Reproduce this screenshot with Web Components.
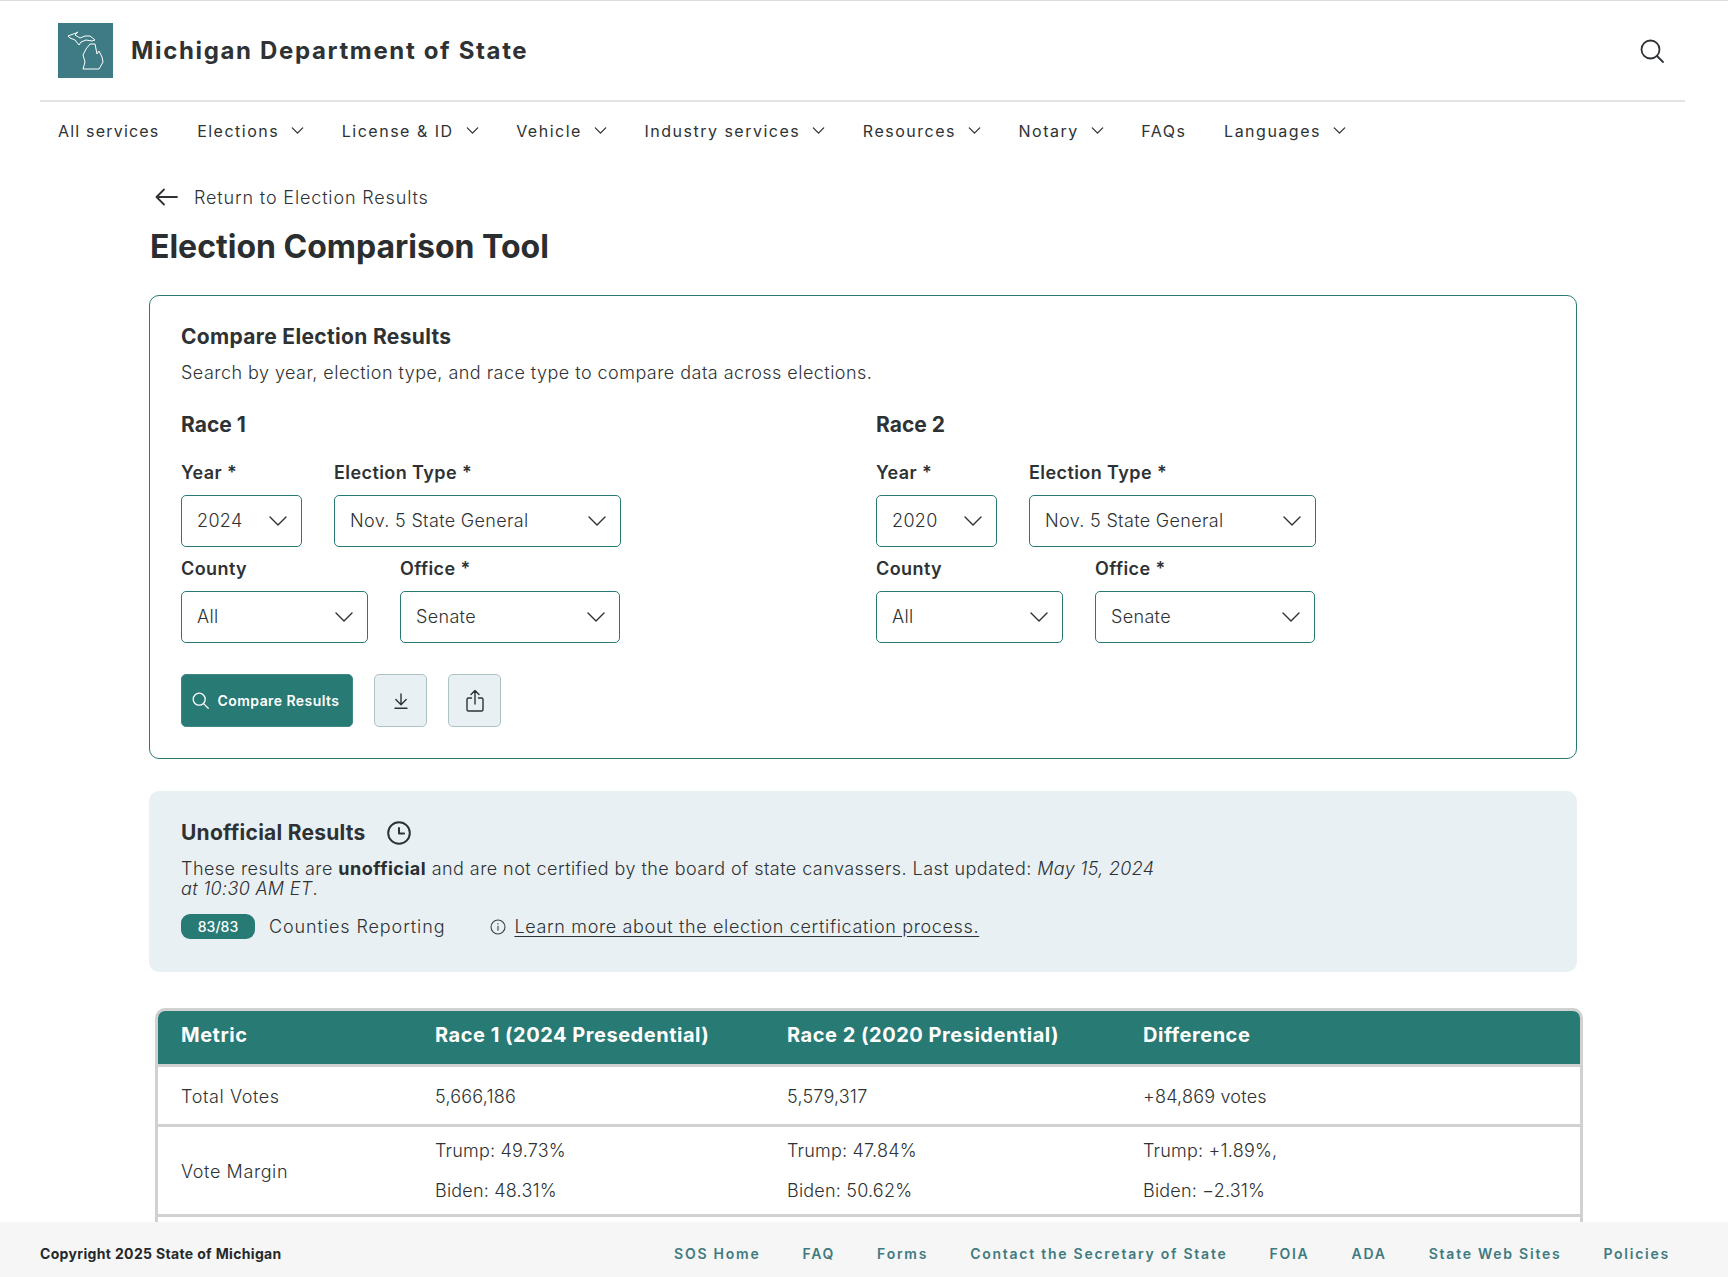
<!DOCTYPE html>
<html lang="en">
<head>
<meta charset="utf-8">
<title>Election Comparison Tool</title>
<style>
    html, body { margin: 0; height: 100%; }
    body {
        height: 100vh;
        overflow: hidden;
        display: flex;
        flex-direction: column;
        font-family: "Inter", "Liberation Sans", sans-serif;
        color: #2e3234;
        background: #fff;
    }
    page-main { display: block; flex: 1; min-height: 0; overflow: hidden; }
</style>
</head>
<body>
<site-header></site-header>
<site-nav>
    <nav-item style="letter-spacing:1.2px">All services</nav-item>
    <nav-item menu>Elections</nav-item>
    <nav-item menu>License &amp; ID</nav-item>
    <nav-item menu>Vehicle</nav-item>
    <nav-item menu>Industry services</nav-item>
    <nav-item menu>Resources</nav-item>
    <nav-item menu>Notary</nav-item>
    <nav-item>FAQs</nav-item>
    <nav-item menu>Languages</nav-item>
</site-nav>
<page-main>
    <page-heading></page-heading>
    <compare-card>
        <race-form slot="race" name="Race 1" year="2024"></race-form>
        <race-form slot="race" name="Race 2" year="2020"></race-form>
    </compare-card>
    <unofficial-results></unofficial-results>
    <results-table></results-table>
</page-main>
<site-footer></site-footer>

<script>
const chevron = (size, stroke) => `<svg width="${size}" height="${size}" viewBox="0 0 20 20" fill="none" stroke="currentColor" stroke-width="${stroke}" stroke-linecap="round" stroke-linejoin="round"><path d="M2 6l8 8 8-8"/></svg>`;

class SiteHeader extends HTMLElement {
    constructor(){
        super();
        this.shadowDOM = this.attachShadow({mode:"open"});
    }

    connectedCallback(){
        this.shadowDOM.innerHTML = `
        <style>
            :host {
                display: block;
                flex: none;
                border-top: 1px solid #dcdcdc;
            }
            .wrap {
                margin: 0 43px 0 40px;
                height: 99px;
                border-bottom: 2px solid #e3e3e3;
                padding: 0 20px 0 18px;
                display: flex;
                align-items: center;
                gap: 18px;
            }
            .logo {
                width: 55px;
                height: 55px;
                background: #3e7b85;
                display: block;
                flex: none;
            }
            h1 {
                margin: 0;
                font-size: 24px;
                line-height: 30px;
                font-weight: 700;
                letter-spacing: 1.65px;
                color: #2e3234;
                flex: 1;
            }
            .search { color: #2e3234; display: block; }
        </style>
        <div class="wrap">
            <svg class="logo" viewBox="0 0 55 55" fill="none" stroke="#fff" stroke-width="1" stroke-linejoin="round">
                <path d="M10 13l8-3 2-1-3 3 5 3 5-2h5l5 4-3 1-6-1-5 2-2 3-4-5-5-2z"/>
                <path d="M32 21h5l1 5 1 5 2-3 3 6 1 5-4 7H25l2-7-2-7 3-6z"/>
            </svg>
            <h1>Michigan Department of State</h1>
            <svg class="search" width="26" height="26" viewBox="0 0 26 26" fill="none" stroke="currentColor" stroke-width="1.8" stroke-linecap="round"><circle cx="11.5" cy="11.500" r="9"/><path d="M18 18l6 6"/></svg>
        </div>
        `;
    }
}

class SiteNav extends HTMLElement {
    constructor(){
        super();
        this.shadowDOM = this.attachShadow({mode:"open"});
    }

    connectedCallback(){
        this.shadowDOM.innerHTML = `
        <style>
            :host {
                display: flex;
                flex: none;
                height: 57px;
                align-items: center;
                gap: 37.6px;
                padding: 0 0 0 58px;
                font-size: 16px;
                letter-spacing: 1.5px;
                color: #2e3234;
            }
        </style>
        <slot></slot>
        `;
    }
}

class NavItem extends HTMLElement {
    constructor(){
        super();
        this.shadowDOM = this.attachShadow({mode:"open"});
    }

    connectedCallback(){
        const arrow = this.hasAttribute("menu") ? chevron(13, 2) : "";
        this.shadowDOM.innerHTML = `
        <style>
            :host {
                display: inline-flex;
                align-items: center;
                gap: 12px;
                line-height: 24px;
                white-space: nowrap;
            }
            svg { display: block; }
        </style>
        <span><slot></slot></span>${arrow}
        `;
    }
}

class PageHeading extends HTMLElement {
    constructor(){
        super();
        this.shadowDOM = this.attachShadow({mode:"open"});
    }

    connectedCallback(){
        this.shadowDOM.innerHTML = `
        <style>
            :host { display: block; padding: 26px 0 0 150px; }
            a {
                display: flex;
                align-items: center;
                gap: 16px;
                margin: 0 0 0 5px;
                height: 24px;
                font-size: 18px;
                font-weight: 300;
                color: #2e3234;
                text-decoration: none;
                letter-spacing: 0.85px;
            }
            h1 {
                margin: 18px 0 28px;
                font-size: 32px;
                line-height: 40px;
                font-weight: 700;
                color: #2a2e30;
            }
        </style>
        <a href="#">
            <svg width="23" height="18" viewBox="0 0 23 18" fill="none" stroke="currentColor" stroke-width="1.8" stroke-linecap="round" stroke-linejoin="round"><path d="M22 9H1.500M9 1.500L1.500 9 9 16.500"/></svg>
            Return to Election Results
        </a>
        <h1>Election Comparison Tool</h1>
        `;
    }
}

class FieldSelect extends HTMLElement {
    constructor(){
        super();
        this.shadowDOM = this.attachShadow({mode:"open"});
    }

    connectedCallback(){
        this.shadowDOM.innerHTML = `
        <style>
            :host {
                display: block;
                width: ${this.getAttribute("width")}px;
            }
            .label {
                display: block;
                font-size: 18px;
                font-weight: 600;
                letter-spacing: 0.42px;
                line-height: 24px;
                margin-bottom: 10px;
                white-space: nowrap;
            }
            .box {
                box-sizing: border-box;
                height: 52px;
                border: 1px solid #287a75;
                border-radius: 5px;
                background: #fff;
                padding: 0 13px 0 15px;
                display: flex;
                align-items: center;
                justify-content: space-between;
                font-size: 18px;
                font-weight: 300;
                letter-spacing: 0.33px;
                color: #2e3234;
                white-space: nowrap;
            }
            .box span { margin-top: -1px; }
            svg { display: block; flex: none; }
        </style>
        <span class="label">${this.getAttribute("label")}</span>
        <div class="box"><span><slot></slot></span>${chevron(20, 1.4)}</div>
        `;
    }
}

class RaceForm extends HTMLElement {
    constructor(){
        super();
        this.shadowDOM = this.attachShadow({mode:"open"});
    }

    connectedCallback(){
        this.shadowDOM.innerHTML = `
        <style>
            :host { display: block; }
            h3 {
                margin: 0 0 23px;
                font-size: 21px;
                line-height: 26px;
                font-weight: 700;
            }
            .row { display: flex; gap: 32px; margin-bottom: 10px; }
        </style>
        <h3>${this.getAttribute("name")}</h3>
        <div class="row">
            <field-select label="Year *" width="121">${this.getAttribute("year")}</field-select>
            <field-select label="Election Type *" width="287">Nov. 5 State General</field-select>
        </div>
        <div class="row">
            <field-select label="County" width="187">All</field-select>
            <field-select label="Office *" width="220">Senate</field-select>
        </div>
        `;
    }
}

class CompareCard extends HTMLElement {
    constructor(){
        super();
        this.shadowDOM = this.attachShadow({mode:"open"});
    }

    connectedCallback(){
        this.shadowDOM.innerHTML = `
        <style>
            :host {
                display: block;
                box-sizing: border-box;
                width: 1428px;
                margin-left: 149px;
                height: 464px;
                border: 1px solid #287a75;
                border-radius: 10px;
                padding: 28px 31px 0;
            }
            h2 {
                margin: 0;
                font-size: 21px;
                letter-spacing: 0.33px;
                line-height: 26px;
                font-weight: 700;
            }
            p {
                margin: 10px 0 26px;
                font-size: 18px;
                font-weight: 300;
                letter-spacing: 0.46px;
                line-height: 26px;
                color: #2e3234;
            }
            .races {
                display: grid;
                grid-template-columns: 695px 1fr;
            }
            .actions {
                display: flex;
                margin-top: 21px;
                gap: 21px;
            }
            button {
                box-sizing: border-box;
                height: 53px;
                border-radius: 5px;
                font-family: inherit;
                padding: 0;
                display: flex;
                align-items: center;
                justify-content: center;
            }
            .primary {
                width: 172px;
                background: #287a75;
                border: 1px solid #3f8883;
                color: #fff;
                font-size: 14px;
                font-weight: 600;
                letter-spacing: 0.44px;
                gap: 9px;
                padding-right: 3px;
            }
            .ghost {
                width: 53px;
                background: #e9f0f3;
                border: 1px solid #aec2c4;
                color: #2e3234;
            }
            svg { display: block; }
        </style>
        <h2>Compare Election Results</h2>
        <p>Search by year, election type, and race type to compare data across elections.</p>
        <div class="races"><slot name="race"></slot></div>
        <div class="actions">
            <button class="primary">
                <svg width="17" height="17" viewBox="0 0 17 17" fill="none" stroke="currentColor" stroke-width="1.3" stroke-linecap="round"><circle cx="7.200" cy="7.200" r="6"/><path d="M11.600 11.600l4.600 4.600"/></svg>
                Compare Results
            </button>
            <button class="ghost">
                <svg width="18" height="18" viewBox="0 0 18 18" fill="none" stroke="currentColor" stroke-width="1.4" stroke-linecap="round" stroke-linejoin="round"><path d="M9 2v10.500M3.800 7.600L9 12.800l5.200-5.200M3 16.300h12"/></svg>
            </button>
            <button class="ghost">
                <svg width="20" height="24" viewBox="0 0 20 24" fill="none" stroke="currentColor" stroke-width="1.4" stroke-linecap="round" stroke-linejoin="round"><path d="M10 15V2M6 5.600L10 1.600l4 4M6.500 9H3.500A1.500 1.500 0 0 0 2 10.500v10A1.500 1.500 0 0 0 3.500 22h13a1.500 1.500 0 0 0 1.500-1.500v-10A1.500 1.500 0 0 0 16.500 9H13.500"/></svg>
            </button>
        </div>
        `;
    }
}

class UnofficialResults extends HTMLElement {
    constructor(){
        super();
        this.shadowDOM = this.attachShadow({mode:"open"});
    }

    connectedCallback(){
        this.shadowDOM.innerHTML = `
        <style>
            :host {
                display: block;
                box-sizing: border-box;
                width: 1428px;
                height: 181px;
                margin: 32px 0 36px 149px;
                background: #e9f0f3;
                border-radius: 10px;
                padding: 29px 32px 0;
            }
            .title { display: flex; align-items: center; gap: 21px; height: 26px; }
            h2 { margin: 0; font-size: 21px; letter-spacing: 0.25px; line-height: 26px; font-weight: 700; }
            svg { display: block; flex: none; }
            p {
                margin: 13px 0 0;
                width: 980px;
                font-size: 18px;
                font-weight: 300;
                letter-spacing: 0.44px;
                line-height: 20px;
                color: #2e3234;
            }
            p b { font-weight: 700; color: #2a2e30; letter-spacing: 0.5px; }
            p i { letter-spacing: 0.3px; }
            .status {
                display: flex;
                align-items: center;
                margin-top: 15px;
                font-size: 18px;
                font-weight: 300;
                letter-spacing: 0.65px;
                color: #2e3234;
            }
            .badge {
                width: 74px;
                height: 25px;
                border-radius: 9px;
                background: #287a75;
                color: #fff;
                font-size: 14px;
                font-weight: 500;
                letter-spacing: 0;
                text-align: center;
                line-height: 25px;
                margin-right: 14px;
            }
            .count { letter-spacing: 0.9px; }
            .info { margin: 0 8px 0 45px; }
            a { color: #2e3234; text-underline-offset: 3px; }
        </style>
        <div class="title">
            <h2>Unofficial Results</h2>
            <svg width="24" height="24" viewBox="0 0 24 24" fill="none" stroke="#2e3234" stroke-width="2" stroke-linecap="round" stroke-linejoin="round"><circle cx="12" cy="12" r="10.800"/><path d="M12 7v5.500h5"/></svg>
        </div>
        <p>These results are <b>unofficial</b> and are not certified by the board of state canvassers. Last updated: <i>May 15, 2024 at 10:30 AM ET</i>.</p>
        <div class="status">
            <span class="badge">83/83</span>
            <span class="count">Counties Reporting</span>
            <svg class="info" width="16" height="16" viewBox="0 0 16 16" fill="none" stroke="#3a3e40" stroke-width="1.1" stroke-linecap="round"><circle cx="8" cy="8" r="7"/><path d="M8 7.300v4M8 4.500v.4"/></svg>
            <a href="#">Learn more about the election certification process.</a>
        </div>
        `;
    }
}

class ResultsTable extends HTMLElement {
    constructor(){
        super();
        this.shadowDOM = this.attachShadow({mode:"open"});
    }

    connectedCallback(){
        this.shadowDOM.innerHTML = `
        <style>
            :host {
                display: block;
                box-sizing: border-box;
                width: 1428px;
                margin-left: 155px;
                border: 3px solid #d1d1d1;
                border-radius: 10px;
                overflow: hidden;
            }
            table {
                width: 100%;
                border-collapse: collapse;
                table-layout: fixed;
                font-size: 18px;
                font-weight: 300;
                letter-spacing: 0.2px;
                color: #2e3234;
            }
            th {
                height: 54px;
                box-sizing: border-box;
                padding: 0 0 4px 23px;
                background: #287a75;
                color: #fff;
                text-align: left;
                font-size: 20px;
                font-weight: 700;
                letter-spacing: 0.52px;
                white-space: nowrap;
            }
            td {
                padding: 2px 0 0 23px;
                border-top: 3px solid #d1d1d1;
            }
            td:first-child { letter-spacing: 0.6px; }
            tr.one td { height: 55px; }
            tr.two td { height: 85px; }
            tr.three td { height: 58px; }
            td div { line-height: 24px; }
            td div + div { margin-top: 16px; }
        </style>
        <table>
            <colgroup><col style="width:254px"><col style="width:352px"><col style="width:356px"><col></colgroup>
            <thead>
                <tr><th>Metric</th><th>Race 1 (2024 Presedential)</th><th>Race 2 (2020 Presidential)</th><th>Difference</th></tr>
            </thead>
            <tbody>
                <tr class="one"><td>Total Votes</td><td>5,666,186</td><td>5,579,317</td><td>+84,869 votes</td></tr>
                <tr class="two">
                    <td>Vote Margin</td>
                    <td><div>Trump: 49.73%</div><div>Biden: 48.31%</div></td>
                    <td><div>Trump: 47.84%</div><div>Biden: 50.62%</div></td>
                    <td><div>Trump: +1.89%,</div><div>Biden: −2.31%</div></td>
                </tr>
                <tr class="three"><td></td><td></td><td></td><td></td></tr>
            </tbody>
        </table>
        `;
    }
}

class SiteFooter extends HTMLElement {
    constructor(){
        super();
        this.shadowDOM = this.attachShadow({mode:"open"});
    }

    connectedCallback(){
        const links = ["SOS Home", "FAQ", "Forms", "Contact the Secretary of State", "FOIA", "ADA", "State Web Sites", "Policies"];
        this.shadowDOM.innerHTML = `
        <style>
            :host {
                display: flex;
                flex: none;
                box-sizing: border-box;
                height: 55px;
                align-items: center;
                justify-content: space-between;
                background: #f6f6f6;
                padding: 7px 58px 0 40px;
                font-size: 14px;
                font-weight: 700;
                letter-spacing: 0.34px;
                color: #26292b;
            }
            nav { display: flex; gap: 42px; }
            a {
                color: #3f7a80;
                text-decoration: none;
                font-weight: 600;
                letter-spacing: 1.75px;
                white-space: nowrap;
            }
        </style>
        <span>Copyright 2025 State of Michigan</span>
        <nav>${links.map(l => `<a href="#">${l}</a>`).join("")}</nav>
        `;
    }
}

customElements.define("site-header", SiteHeader);
customElements.define("site-nav", SiteNav);
customElements.define("nav-item", NavItem);
customElements.define("page-heading", PageHeading);
customElements.define("field-select", FieldSelect);
customElements.define("race-form", RaceForm);
customElements.define("compare-card", CompareCard);
customElements.define("unofficial-results", UnofficialResults);
customElements.define("results-table", ResultsTable);
customElements.define("site-footer", SiteFooter);
</script>
</body>
</html>
